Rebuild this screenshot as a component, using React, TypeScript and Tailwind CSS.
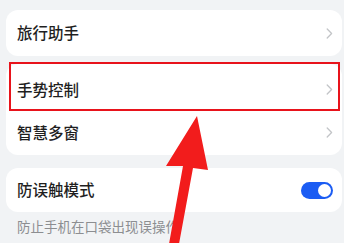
import React from 'react'

const Chevron = () => (
  <svg width="7" height="11" viewBox="0 0 7 11" fill="none" className="shrink-0">
    <path d="M1.2 1l4.4 4.5-4.4 4.5" stroke="#c3c5c8" strokeWidth="1.3" strokeLinecap="round" strokeLinejoin="round" />
  </svg>
)

function Row({ label, height = 'h-[43px]', right }: { label: string; height?: string; right?: React.ReactNode }) {
  return (
    <div className={`flex items-center justify-between pl-[11px] pr-[9px] ${height}`}>
      <span className="text-[15.5px] leading-none text-[#1f1f1f] font-medium">{label}</span>
      {right ?? <Chevron />}
    </div>
  )
}

export default function App() {
  return (
    <div
      className="relative w-[344px] h-[243px] overflow-hidden bg-[#f1f3f5]"
      style={{ fontFamily: '"Noto Sans CJK SC", "Noto Sans", sans-serif' }}
    >
      <div className="flex flex-col pl-[6px] pr-[2px] pt-[10px]">
        {/* first card */}
        <div className="rounded-[12px] bg-white">
          <Row label="旅行助手" height="h-[46px]" />
        </div>

        {/* second card */}
        <div className="mt-[8px] rounded-[12px] bg-white pt-[4px] pb-[1px]">
          <Row label="手势控制" />
          <Row label="智慧多窗" />
        </div>

        {/* third card */}
        <div className="mt-[13px] rounded-[12px] bg-white">
          <Row
            label="防误触模式"
            height="h-[44px]"
            right={
              <div className="flex items-center justify-end w-[32px] h-[17px] rounded-full bg-[#1b5cf3] pr-[2px]">
                <div className="w-[13px] h-[13px] rounded-full bg-white" />
              </div>
            }
          />
        </div>

        <p className="mt-[8px] pl-[11px] text-[13.5px] leading-none text-[#8c8e91]">防止手机在口袋出现误操作</p>
      </div>

      {/* highlight box */}
      <div className="absolute left-[9px] top-[62px] w-[331px] h-[49px] border-2 border-[#e8131b]" />

      {/* arrow */}
      <svg className="absolute left-0 top-0" width="344" height="243" viewBox="0 0 344 243">
        <polygon
          points="197,116 208,170 193,168 179,244 169,244 183,166 166,166"
          fill="#f21c1c"
        />
      </svg>
    </div>
  )
}
